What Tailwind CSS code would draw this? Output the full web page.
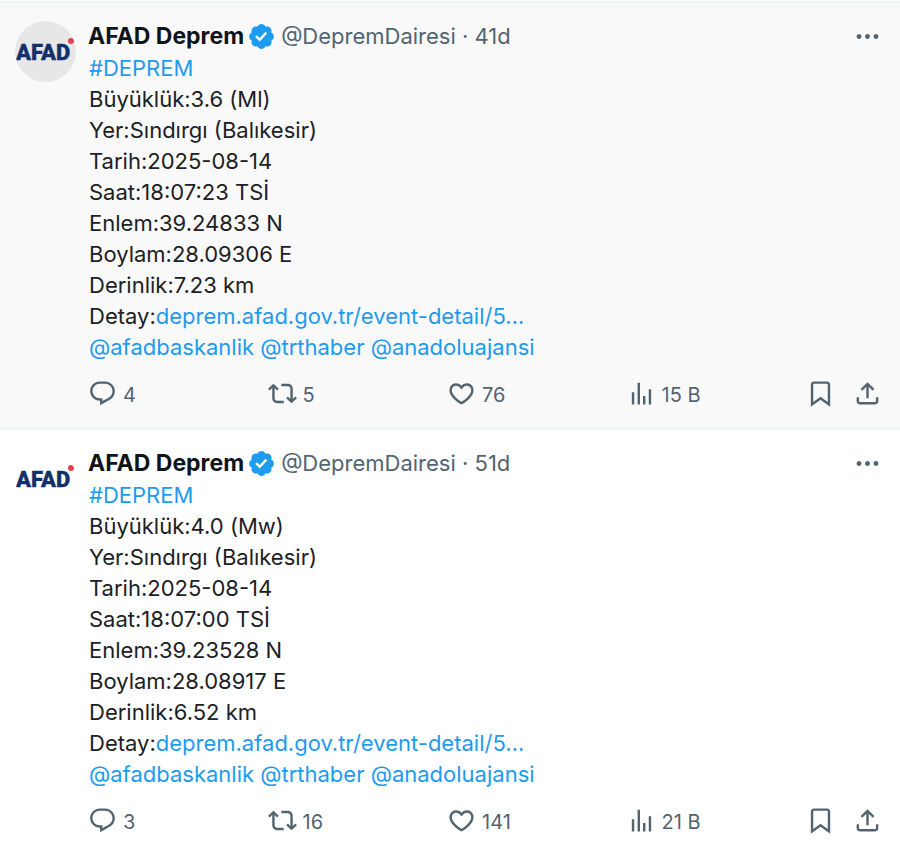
<!DOCTYPE html>
<html lang="tr">
<head>
<meta charset="utf-8">
<meta name="viewport" content="width=device-width, initial-scale=1">
<title>AFAD Deprem</title>
<script src="https://cdn.jsdelivr.net/npm/@tailwindcss/browser@4"></script>
</head>
<body class="bg-white font-['Inter','Liberation_Sans',sans-serif] text-[#0f1419]">
<svg class="hidden" aria-hidden="true">
  <symbol id="verified" viewBox="0 0 22 22"><path d="M20.396 11c-.018-.646-.215-1.275-.57-1.816-.354-.54-.852-.972-1.438-1.246.223-.607.27-1.264.14-1.897-.131-.634-.437-1.218-.882-1.687-.47-.445-1.053-.75-1.687-.882-.633-.13-1.29-.083-1.897.14-.273-.587-.704-1.086-1.245-1.44S11.647 1.62 11 1.604c-.646.017-1.273.213-1.813.568s-.969.854-1.24 1.44c-.608-.223-1.267-.272-1.902-.14-.635.13-1.22.436-1.69.882-.445.47-.749 1.055-.878 1.688-.13.633-.08 1.29.144 1.896-.587.274-1.087.705-1.443 1.245-.356.54-.555 1.17-.574 1.817.02.647.218 1.276.574 1.817.356.54.856.972 1.443 1.245-.224.606-.274 1.263-.144 1.896.13.634.433 1.218.877 1.688.47.443 1.054.747 1.687.878.633.132 1.29.084 1.897-.136.274.586.705 1.084 1.246 1.439.54.354 1.17.551 1.816.569.647-.016 1.276-.213 1.817-.567s.972-.854 1.245-1.44c.604.239 1.266.296 1.903.164.636-.132 1.22-.447 1.68-.907.46-.46.776-1.044.908-1.681s.075-1.299-.165-1.903c.586-.274 1.084-.705 1.439-1.246.354-.54.551-1.17.569-1.816zM9.662 14.85l-3.429-3.428 1.293-1.302 2.072 2.072 4.4-4.794 1.347 1.246z"/></symbol>
  <symbol id="more" viewBox="0 0 24 24"><path d="M3 12c0-1.1.9-2 2-2s2 .9 2 2-.9 2-2 2-2-.9-2-2zm9 2c1.1 0 2-.9 2-2s-.9-2-2-2-2 .9-2 2 .9 2 2 2zm7 0c1.1 0 2-.9 2-2s-.9-2-2-2-2 .9-2 2 .9 2 2 2z"/></symbol>
  <symbol id="reply" viewBox="0 0 24 24"><path d="M1.751 10c0-4.42 3.584-8 8.005-8h4.366c4.49 0 8.129 3.64 8.129 8.13 0 2.96-1.607 5.68-4.196 7.11l-8.054 4.46v-3.69h-.067c-4.49.1-8.183-3.51-8.183-8.01zm8.005-6c-3.317 0-6.005 2.69-6.005 6 0 3.37 2.77 6.08 6.138 6.01l.351-.01h1.761v2.3l5.087-2.81c1.951-1.08 3.163-3.13 3.163-5.36 0-3.39-2.744-6.13-6.129-6.13H9.756z"/></symbol>
  <symbol id="repost" viewBox="0 0 24 24"><path d="M4.5 3.88l4.432 4.14-1.364 1.46L5.5 7.55V16c0 1.1.896 2 2 2H13v2H7.5c-2.209 0-4-1.79-4-4V7.55L1.432 9.48.068 8.02 4.5 3.88zM16.5 6H11V4h5.5c2.209 0 4 1.79 4 4v8.45l2.068-1.93 1.364 1.46-4.432 4.14-4.432-4.14 1.364-1.46 2.068 1.93V8c0-1.1-.896-2-2-2z"/></symbol>
  <symbol id="like" viewBox="0 0 24 24"><path d="M16.697 5.5c-1.222-.06-2.679.51-3.89 2.16l-.805 1.09-.806-1.09C9.984 6.01 8.526 5.44 7.304 5.5c-1.243.07-2.349.78-2.91 1.91-.552 1.12-.633 2.78.479 4.82 1.074 1.97 3.257 4.27 7.129 6.61 3.87-2.34 6.052-4.64 7.126-6.61 1.111-2.04 1.03-3.7.477-4.82-.561-1.13-1.666-1.84-2.908-1.91zm4.187 7.69c-1.351 2.48-4.001 5.12-8.379 7.67l-.503.3-.504-.3c-4.379-2.55-7.029-5.19-8.382-7.67-1.36-2.5-1.41-4.86-.514-6.67.887-1.79 2.647-2.91 4.601-3.01 1.651-.09 3.368.56 4.798 2.01 1.429-1.45 3.146-2.1 4.796-2.01 1.954.1 3.714 1.22 4.601 3.01.896 1.81.846 4.17-.514 6.67z"/></symbol>
  <symbol id="views" viewBox="0 0 24 24"><path d="M8.75 21V3h2v18h-2zM18 21V8.5h2V21h-2zM4 21l.004-10h2L6 21H4zm9.248 0v-7h2v7h-2z"/></symbol>
  <symbol id="bookmark" viewBox="0 0 24 24"><path d="M4 4.5C4 3.12 5.119 2 6.5 2h11C18.881 2 20 3.12 20 4.5v18.44l-8-5.71-8 5.71V4.5zM6.5 4c-.276 0-.5.22-.5.5v14.56l6-4.29 6 4.29V4.5c0-.28-.224-.5-.5-.5h-11z"/></symbol>
  <symbol id="share" viewBox="0 0 24 24"><path d="M12 2.59l5.7 5.7-1.41 1.42L13 6.41V16h-2V6.41l-3.3 3.3-1.41-1.42L12 2.59zM21 15l-.02 3.51c0 1.38-1.12 2.49-2.5 2.49H5.5C4.11 21 3 19.88 3 18.5V15h2v3.5c0 .28.22.5.5.5h12.98c.28 0 .5-.22.5-.5L19 15h2z"/></symbol>
</svg>
<main class="pt-px">
  <article class="flex gap-3 border-t-2 border-[#eff3f4] bg-[#f9f9f9] pt-[18px] pr-[18px] pb-5 pl-[15px]">
    <a href="#" aria-label="AFAD Deprem" class="size-[61px] shrink-0 overflow-hidden rounded-full bg-[#e7e7e7]">
      <svg viewBox="0 0 61 61" class="size-full"><text x="1" y="39" font-family="Roboto, sans-serif" font-weight="900" font-size="22" fill="#12306b" stroke="#12306b" stroke-width=".3">AFAD</text><circle cx="56" cy="20" r="3" fill="#e5404f"/></svg>
    </a>
    <div class="min-w-0 flex-1">
      <header class="flex h-[31px] items-center text-[22px] leading-[31px]">
        <a href="#" class="text-[23px] font-bold">AFAD Deprem</a>
        <svg class="mx-[3px] size-[29px] shrink-0 fill-[#1d9bf0]" role="img" aria-label="Onaylı hesap"><use href="#verified"/></svg>
        <a href="#" class="pl-[2px] whitespace-nowrap text-[#536471]">@DepremDairesi · <time>41d</time></a>
        <button type="button" aria-label="Daha fazla" class="ml-auto"><svg class="size-[29px] fill-[#536471]"><use href="#more"/></svg></button>
      </header>
      <div class="pt-px pl-px text-[22px] leading-[31px] text-[#1c2126]">
        <p><a href="#" class="text-[#1d9bf0]">#DEPREM</a></p>
        <p>Büyüklük:3.6 (Ml)</p>
        <p>Yer:Sındırgı (Balıkesir)</p>
        <p>Tarih:2025-08-14</p>
        <p>Saat:18:07:23 TSİ</p>
        <p>Enlem:39.24833 N</p>
        <p>Boylam:28.09306 E</p>
        <p>Derinlik:7.23 km</p>
        <p>Detay:<a href="#" class="text-[#1d9bf0]">deprem.afad.gov.tr/event-detail/5…</a></p>
        <p class="text-[#1d9bf0]"><a href="#">@afadbaskanlik</a> <a href="#">@trthaber</a> <a href="#">@anadoluajansi</a></p>
      </div>
      <footer class="grid grid-cols-[1fr_1fr_1fr_1fr_auto] items-center pt-4 text-[20px] leading-[25px] text-[#536471]">
        <button type="button" aria-label="Yanıtla" class="flex items-end gap-[6px]"><svg class="size-[29px] fill-current"><use href="#reply"/></svg>4</button>
        <button type="button" aria-label="Yeniden gönder" class="flex items-end gap-[6px]"><svg class="size-[29px] fill-current"><use href="#repost"/></svg>5</button>
        <button type="button" aria-label="Beğen" class="flex items-end gap-[6px]"><svg class="size-[29px] fill-current"><use href="#like"/></svg>76</button>
        <a href="#" aria-label="Görüntülenme" class="flex items-end gap-[6px]"><svg class="size-[29px] fill-current"><use href="#views"/></svg>15 B</a>
        <div class="flex gap-[18px]">
          <button type="button" aria-label="Yer işareti"><svg class="size-[29px] fill-current"><use href="#bookmark"/></svg></button>
          <button type="button" aria-label="Paylaş"><svg class="size-[29px] fill-current"><use href="#share"/></svg></button>
        </div>
      </footer>
    </div>
  </article>
  <article class="flex gap-3 border-t-2 border-[#eff3f4] bg-white pt-[18px] pr-[18px] pl-[15px]">
    <a href="#" aria-label="AFAD Deprem" class="size-[61px] shrink-0 overflow-hidden rounded-full bg-white">
      <svg viewBox="0 0 61 61" class="size-full"><text x="1" y="39" font-family="Roboto, sans-serif" font-weight="900" font-size="22" fill="#12306b" stroke="#12306b" stroke-width=".3">AFAD</text><circle cx="56" cy="20" r="3" fill="#e5404f"/></svg>
    </a>
    <div class="min-w-0 flex-1">
      <header class="flex h-[31px] items-center text-[22px] leading-[31px]">
        <a href="#" class="text-[23px] font-bold">AFAD Deprem</a>
        <svg class="mx-[3px] size-[29px] shrink-0 fill-[#1d9bf0]" role="img" aria-label="Onaylı hesap"><use href="#verified"/></svg>
        <a href="#" class="pl-[2px] whitespace-nowrap text-[#536471]">@DepremDairesi · <time>51d</time></a>
        <button type="button" aria-label="Daha fazla" class="ml-auto"><svg class="size-[29px] fill-[#536471]"><use href="#more"/></svg></button>
      </header>
      <div class="pt-px pl-px text-[22px] leading-[31px] text-[#1c2126]">
        <p><a href="#" class="text-[#1d9bf0]">#DEPREM</a></p>
        <p>Büyüklük:4.0 (Mw)</p>
        <p>Yer:Sındırgı (Balıkesir)</p>
        <p>Tarih:2025-08-14</p>
        <p>Saat:18:07:00 TSİ</p>
        <p>Enlem:39.23528 N</p>
        <p>Boylam:28.08917 E</p>
        <p>Derinlik:6.52 km</p>
        <p>Detay:<a href="#" class="text-[#1d9bf0]">deprem.afad.gov.tr/event-detail/5…</a></p>
        <p class="text-[#1d9bf0]"><a href="#">@afadbaskanlik</a> <a href="#">@trthaber</a> <a href="#">@anadoluajansi</a></p>
      </div>
      <footer class="grid grid-cols-[1fr_1fr_1fr_1fr_auto] items-center pt-4 text-[20px] leading-[25px] text-[#536471]">
        <button type="button" aria-label="Yanıtla" class="flex items-end gap-[6px]"><svg class="size-[29px] fill-current"><use href="#reply"/></svg>3</button>
        <button type="button" aria-label="Yeniden gönder" class="flex items-end gap-[6px]"><svg class="size-[29px] fill-current"><use href="#repost"/></svg>16</button>
        <button type="button" aria-label="Beğen" class="flex items-end gap-[6px]"><svg class="size-[29px] fill-current"><use href="#like"/></svg>141</button>
        <a href="#" aria-label="Görüntülenme" class="flex items-end gap-[6px]"><svg class="size-[29px] fill-current"><use href="#views"/></svg>21 B</a>
        <div class="flex gap-[18px]">
          <button type="button" aria-label="Yer işareti"><svg class="size-[29px] fill-current"><use href="#bookmark"/></svg></button>
          <button type="button" aria-label="Paylaş"><svg class="size-[29px] fill-current"><use href="#share"/></svg></button>
        </div>
      </footer>
    </div>
  </article>
</main>
</body>
</html>
